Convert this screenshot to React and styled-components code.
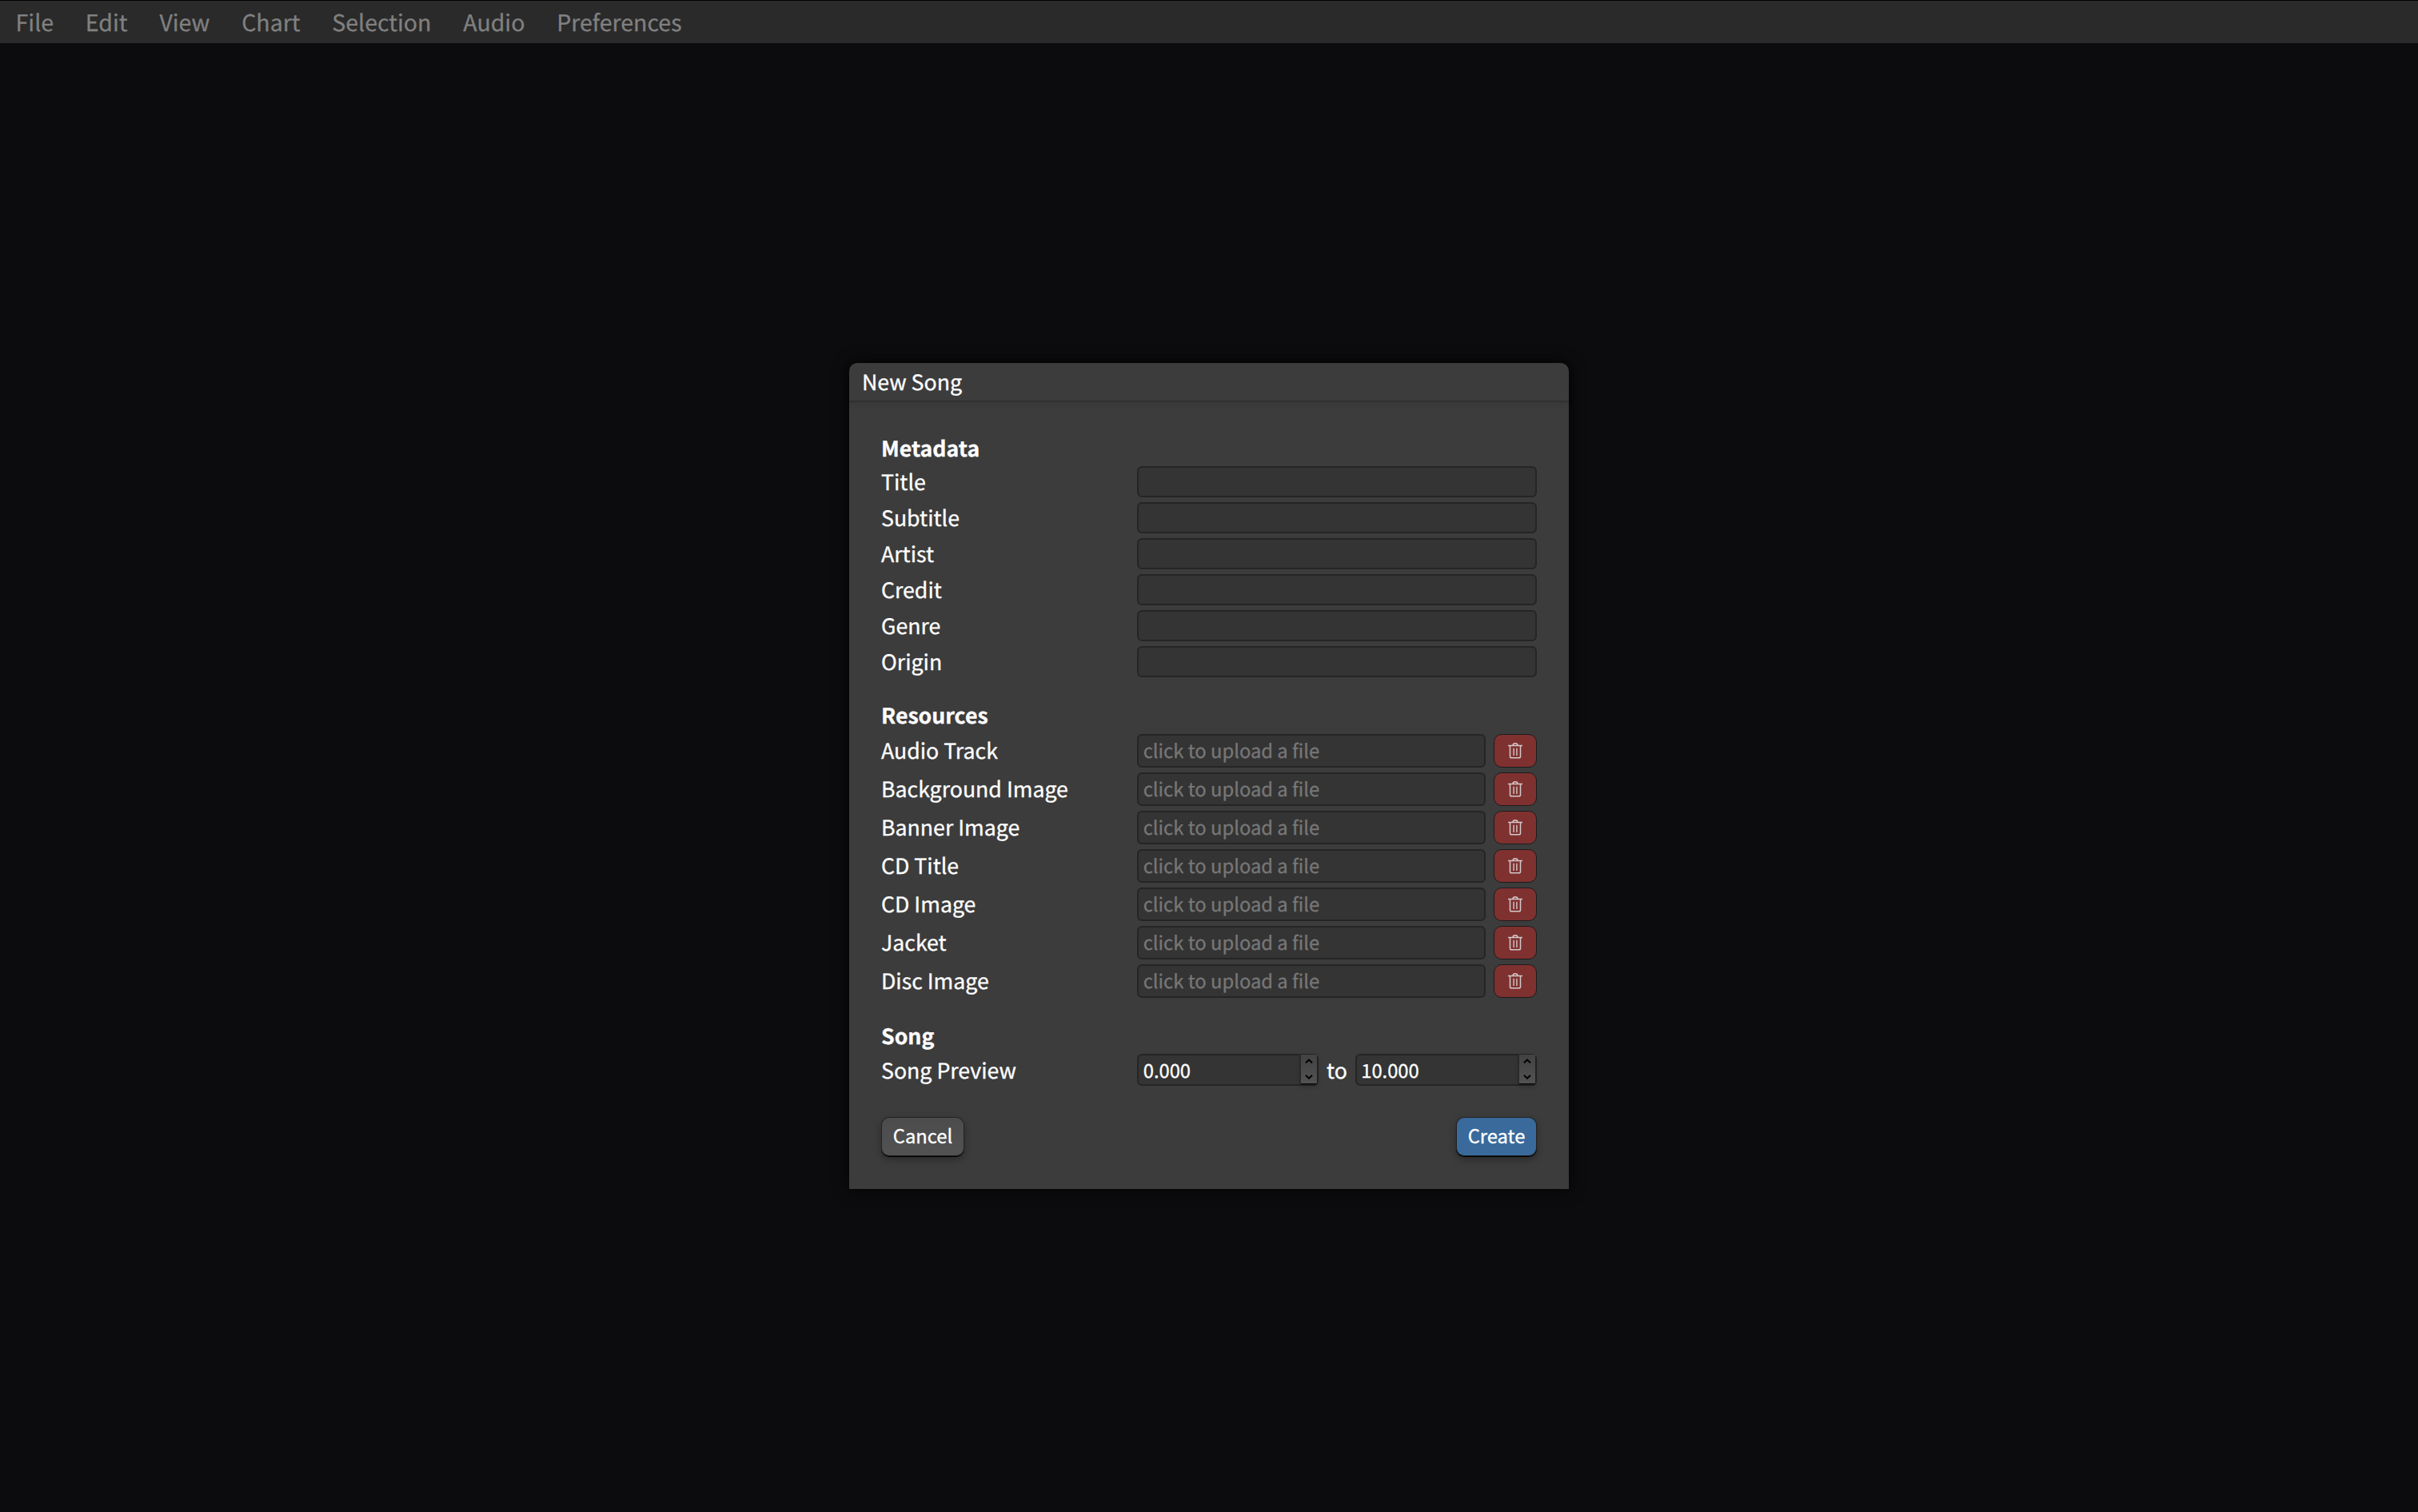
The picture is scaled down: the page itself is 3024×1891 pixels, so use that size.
import React from "react";
import styled, { createGlobalStyle } from "styled-components";

const GlobalStyle = createGlobalStyle`
  *, *::before, *::after { box-sizing: border-box; }
  body {
    margin: 0;
    background: #0c0c0e;
    color: #fff;
    font-family: "Noto Sans CJK SC", "Noto Sans", sans-serif;
    font-size: 26.7px;
    line-height: 36px;
    text-rendering: geometricPrecision;
    -webkit-font-smoothing: antialiased;
    -webkit-text-stroke: 0.3px currentColor;
  }
`;

const Page = styled.div`
  display: flex;
  flex-direction: column;
  height: 1891px;
  overflow: hidden;
`;

const MenuBar = styled.nav`
  display: flex;
  height: 54px;
  flex: none;
  padding-left: 19.6px;
  gap: 39.8px;
  border-top: 1px solid #000;
  background: #2a2a2a;
`;

const MenuItem = styled.span`
  color: #808080;
  font-size: 28.5px;
  line-height: 53px;
`;

const Stage = styled.main`
  flex: 1;
  display: flex;
  justify-content: center;
  align-items: flex-start;
  padding-top: 400px;
`;

const Dialog = styled.section`
  width: 900px;
  height: 1033px;
  border-radius: 10px 10px 0 0;
  background: #3c3c3c;
  box-shadow: 0 0 20px rgba(0, 0, 0, 0.8);
`;

const DialogHeader = styled.header`
  height: 49px;
  padding: 5px 16px 0;
  border-bottom: 2px solid #303030;
  box-shadow: 0 2px 8px rgba(0, 0, 0, 0.08);
`;

const DialogBody = styled.div`
  padding: 38px 40px 40px;
  display: flex;
  flex-direction: column;
  gap: 28px;
`;

const Group = styled.div`
  display: flex;
  flex-direction: column;
  gap: 6px;
`;

const Heading = styled.h2`
  height: 36px;
  margin: 0 0 ${(p) => p.$extra || 0}px;
  padding-top: 1px;
  font-size: inherit;
  font-weight: 700;
  line-height: 36px;
`;

const Row = styled.div`
  display: grid;
  grid-template-columns: 320px 1fr;
  height: ${(p) => p.$h}px;
`;

const Label = styled.label`
  padding-top: ${(p) => p.$drop || 1}px;
`;

const Field = styled.div`
  flex: 1;
  height: 100%;
  display: flex;
  border: 2px solid #252525;
  border-radius: 6px;
  background: #343434;
  color: ${(p) => (p.$muted ? "#777777" : "#ffffff")};
  font-size: 23.78px;
  line-height: 36px;
  padding-left: ${(p) => p.$pad || 5.7}px;
`;

const FileControl = styled.div`
  display: flex;
  gap: 10px;
`;

const TrashButton = styled.button`
  width: 54px;
  height: 42px;
  padding: 0;
  display: flex;
  align-items: center;
  justify-content: center;
  border: 1px solid #1c1c1c;
  border-radius: 10px;
  background: #7f3130;
  color: #d4c8c8;
`;

const RangeControl = styled.div`
  display: grid;
  grid-template-columns: 227px 46px 227px;
  text-align: center;
`;

const NumberField = styled(Field)`
  height: 40px;
  text-align: left;
  justify-content: space-between;
`;

const Spinner = styled.span`
  width: 20px;
  height: 37px;
  margin-top: -1px;
  display: flex;
  flex-direction: column;
  align-items: center;
  justify-content: space-between;
  padding: 5px 0;
  background: linear-gradient(#424242, #525252);
  border-bottom: 1px solid #000;
  box-shadow: -2px 0 0 #2a2a2a, 0 3px 6px rgba(0, 0, 0, 0.2);
  color: #000;
`;

const Footer = styled.footer`
  display: flex;
  justify-content: space-between;
  margin-top: 11px;
`;

const Button = styled.button`
  width: ${(p) => p.$w}px;
  height: 49px;
  padding: 0 0 4px;
  border: 1px solid #232323;
  border-bottom-color: #1a1a1a;
  border-radius: 10px;
  background: ${(p) => (p.$primary ? "#396a9b" : "linear-gradient(#4c4c4c, #525252)")};
  box-shadow: 0 1px 0 #000, 0 4px 10px rgba(0, 0, 0, 0.3);
  color: #fff;
  font-family: inherit;
  font-size: 23.78px;
  line-height: 43px;
`;

const TrashIcon = () => (
  <svg width="20" height="22" viewBox="0 0 20 22" fill="none" stroke="currentColor" strokeWidth="1.5">
    <path d="M1 4.6h18M7 4.4a3 2.6 0 0 1 6 0M3.5 4.6v13.4a1.8 1.8 0 0 0 1.8 1.8h9.4a1.8 1.8 0 0 0 1.8-1.8V4.6" />
    <path d="M8.1 7.8v9.2M11.9 7.8v9.2" strokeWidth="1.4" />
  </svg>
);

const Chevron = ({ down }) => (
  <svg width="10" height="6" viewBox="0 0 10 6" fill="none" stroke="currentColor" strokeWidth="2">
    <path d={down ? "M1 .8l4 3.8 4-3.8" : "M1 5.2l4-3.8 4 3.8"} />
  </svg>
);

const menus = ["File", "Edit", "View", "Chart", "Selection", "Audio", "Preferences"];
const metadata = ["Title", "Subtitle", "Artist", "Credit", "Genre", "Origin"];
const resources = [
  "Audio Track",
  "Background Image",
  "Banner Image",
  "CD Title",
  "CD Image",
  "Jacket",
  "Disc Image",
];

const NumberInput = ({ value, pad }) => (
  <NumberField $pad={pad}>
    <span>{value}</span>
    <Spinner>
      <Chevron />
      <Chevron down />
    </Spinner>
  </NumberField>
);

export default function App() {
  return (
    <>
      <GlobalStyle />
      <Page>
        <MenuBar>
          {menus.map((m) => (
            <MenuItem key={m}>{m}</MenuItem>
          ))}
        </MenuBar>
        <Stage>
          <Dialog>
            <DialogHeader>New Song</DialogHeader>
            <DialogBody>
              <Group>
                <Heading>Metadata</Heading>
                {metadata.map((m) => (
                  <Row key={m} $h={39}>
                    <Label>{m}</Label>
                    <Field />
                  </Row>
                ))}
              </Group>
              <Group>
                <Heading $extra={1}>Resources</Heading>
                {resources.map((m) => (
                  <Row key={m} $h={42}>
                    <Label $drop={2}>{m}</Label>
                    <FileControl>
                      <Field $muted>click to upload a file</Field>
                      <TrashButton>
                        <TrashIcon />
                      </TrashButton>
                    </FileControl>
                  </Row>
                ))}
              </Group>
              <Group>
                <Heading>Song</Heading>
                <Row $h={40}>
                  <Label $drop={2}>Song Preview</Label>
                  <RangeControl>
                    <NumberInput value="0.000" />
                    <Label as="span" $drop={2}>to</Label>
                    <NumberInput value="10.000" pad={5.2} />
                  </RangeControl>
                </Row>
              </Group>
              <Footer>
                <Button $w={104}>Cancel</Button>
                <Button $w={101} $primary>Create</Button>
              </Footer>
            </DialogBody>
          </Dialog>
        </Stage>
      </Page>
    </>
  );
}
